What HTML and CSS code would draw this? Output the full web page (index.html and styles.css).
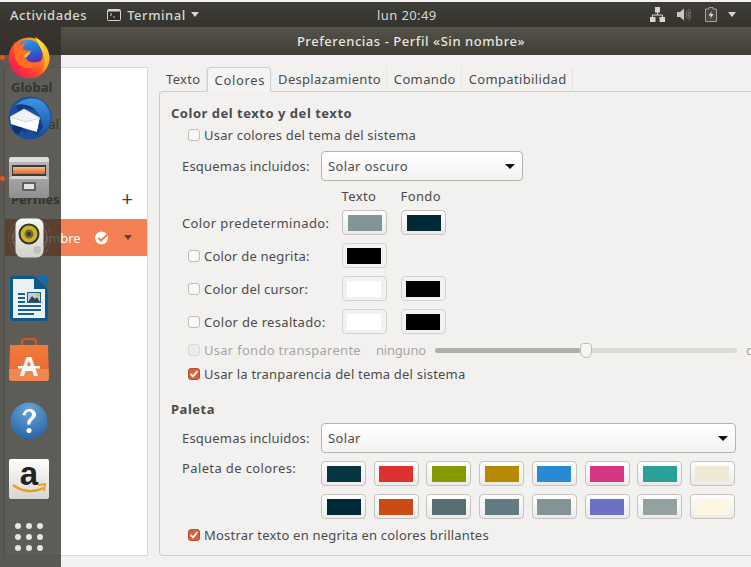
FILE: index.html
```html
<!DOCTYPE html>
<html lang="es">
<head>
<meta charset="utf-8">
<title>Preferencias</title>
<link rel="stylesheet" href="styles.css">
</head>
<body>
<div class="desktop">
  <header class="topbar">
    <div class="top-left">
      <span class="top-text">Actividades</span>
      <span class="top-app">
        <svg class="term-icon" width="14" height="12" viewBox="0 0 14 12"><rect x=".5" y=".5" width="13" height="11" rx="1" fill="#2d2c28" stroke="#d8d6cf"/><rect x="1" y="1" width="12" height="1.500" fill="#d8d6cf"/><path d="M3 4l2 1.500L3 7M6 8h2" stroke="#e8e6df" fill="none" stroke-width=".8"/></svg>
        <span class="top-text">Terminal</span>
        <span class="caret caret-top caret-app"></span>
      </span>
    </div>
    <span class="top-clock">lun 20:49</span>
    <div class="top-right">
      <svg width="15" height="15" viewBox="0 0 15 15"><path d="M5 0h5v5.500H5zM0 10h5.500v5H0zM9.500 10H15v5H9.500z" fill="#d8d6cf"/><path d="M7.500 5v3M2.500 10V8h10v2" stroke="#d8d6cf" fill="none"/></svg>
      <svg width="14" height="13" viewBox="0 0 14 13"><path d="M0 4h3L7 .5v12L3 9H0z" fill="#c9c7c0"/><path d="M8.500 4a3 3 0 010 5M10 2.500a5 5 0 010 8M11.500 1a7 7 0 010 11" stroke="#87857d" fill="none"/></svg>
      <svg class="batt" width="12" height="15" viewBox="0 0 12 15"><path d="M4 .5h4V2h3.500v12.500H.5V2H4z" fill="#4a4840" stroke="#a5a39b"/><path d="M7 4L3.500 8.500H6L5 12l3.500-5H6z" fill="#e8e6df"/></svg>
      <span class="caret caret-top caret-tray"></span>
    </div>
  </header>
  <div class="headerbar">Preferencias - Perfil «Sin nombre»</div>
  <main class="window">
    <aside class="sidebar">
      <div class="side-title side-global">Global</div>
      <div class="side-item">General</div>
      <div class="side-title side-profiles"><span>Perfiles</span><span class="plus">+</span></div>
      <div class="side-active">
        <span class="side-name">Sin nombre</span>
        <svg class="side-check" width="14" height="14" viewBox="0 0 14 14"><circle cx="6.500" cy="7" r="6.500" fill="#fff"/><path d="M3.500 7l2.500 2.500L13 3" stroke="#f48055" stroke-width="2" fill="none"/></svg>
        <span class="caret caret-dark"></span>
      </div>
    </aside>
    <section class="notebook">
      <nav class="tabs">
        <span class="tab">Texto</span>
        <span class="tab tab-active">Colores</span>
        <span class="tab tab-wide">Desplazamiento</span>
        <span class="tab">Comando</span>
        <span class="tab tab-last">Compatibilidad</span>
      </nav>
      <div class="panel">
        <h2 class="heading">Color del texto y del texto</h2>
        <label class="row row-check r-sys"><span class="cb"></span>Usar colores del tema del sistema</label>
        <div class="row row-indent r-scheme"><span class="lab">Esquemas incluidos:</span><div class="combo combo-small"><span>Solar oscuro</span><span class="caret caret-black"></span></div></div>
        <div class="col-heads"><span>Texto</span><span>Fondo</span></div>
        <div class="row row-indent r-color"><span class="lab lab-default">Color predeterminado:</span><span class="sw-btn"><i class="sw c-fg"></i></span><span class="sw-btn"><i class="sw c-bg"></i></span></div>
        <div class="row row-check r-color"><span class="cb"></span><span class="lab2">Color de negrita:</span><span class="sw-btn off"><i class="sw c-black"></i></span></div>
        <div class="row row-check r-color"><span class="cb"></span><span class="lab2">Color del cursor:</span><span class="sw-btn off"><i class="sw c-white"></i></span><span class="sw-btn off"><i class="sw c-black"></i></span></div>
        <div class="row row-check r-color"><span class="cb"></span><span class="lab2 lab-long">Color de resaltado:</span><span class="sw-btn off"><i class="sw c-white"></i></span><span class="sw-btn off"><i class="sw c-black"></i></span></div>
        <div class="row row-check r-trans disabled"><span class="cb cb-dis"></span><span class="lab3">Usar fondo transparente</span><span class="none">ninguno</span><div class="slider"><div class="slider-fill"></div><div class="slider-knob"></div></div><span class="full">completo</span></div>
        <label class="row row-check r-theme"><span class="cb cb-on"><svg width="10" height="10" viewBox="0 0 10 10"><path d="M1.500 5l2.500 2.500L8.500 2" stroke="#fff" stroke-width="1.800" fill="none"/></svg></span>Usar la tranparencia del tema del sistema</label>
        <h2 class="heading h-pal">Paleta</h2>
        <div class="row row-indent r-scheme2"><span class="lab">Esquemas incluidos:</span><div class="combo combo-wide"><span>Solar</span><span class="caret caret-black"></span></div></div>
        <div class="palette-row">
          <span class="lab pal-lab">Paleta de colores:</span>
          <div class="palette">
            <span class="pal-btn"><i class="sw p1"></i></span><span class="pal-btn"><i class="sw p2"></i></span><span class="pal-btn"><i class="sw p3"></i></span><span class="pal-btn"><i class="sw p4"></i></span><span class="pal-btn"><i class="sw p5"></i></span><span class="pal-btn"><i class="sw p6"></i></span><span class="pal-btn"><i class="sw p7"></i></span><span class="pal-btn"><i class="sw p8"></i></span>
            <span class="pal-btn"><i class="sw p9"></i></span><span class="pal-btn"><i class="sw p10"></i></span><span class="pal-btn"><i class="sw p11"></i></span><span class="pal-btn"><i class="sw p12"></i></span><span class="pal-btn"><i class="sw p13"></i></span><span class="pal-btn"><i class="sw p14"></i></span><span class="pal-btn"><i class="sw p15"></i></span><span class="pal-btn"><i class="sw p16"></i></span>
          </div>
        </div>
        <label class="row row-check r-bright"><span class="cb cb-on"><svg width="10" height="10" viewBox="0 0 10 10"><path d="M1.500 5l2.500 2.500L8.500 2" stroke="#fff" stroke-width="1.800" fill="none"/></svg></span>Mostrar texto en negrita en colores brillantes</label>
      </div>
    </section>
  </main>

  <nav class="dock">
    <span class="dock-dot dot-ff"></span>
    <span class="dock-dot dot-files"></span>
    <svg class="dock-icon i-firefox" width="42" height="42" viewBox="0 0 42 42">
      <defs>
        <linearGradient id="ffo" x1="0" y1="1" x2="1" y2="0"><stop offset="0" stop-color="#d9146f"/><stop offset=".3" stop-color="#ff2f3a"/><stop offset=".62" stop-color="#ff7a1f"/><stop offset="1" stop-color="#ffc81f"/></linearGradient>
        <linearGradient id="ffb" x1="0" y1="0" x2=".2" y2="1"><stop offset="0" stop-color="#2f9df0"/><stop offset=".6" stop-color="#2a5fd0"/><stop offset="1" stop-color="#5a2bb0"/></linearGradient>
        <linearGradient id="ffy" x1="0" y1="0" x2="0" y2="1"><stop offset="0" stop-color="#ffe02a"/><stop offset="1" stop-color="#ff9a1f"/></linearGradient>
      </defs>
      <circle cx="21" cy="22" r="20.500" fill="url(#ffo)"/>
      <path d="M12 6C18 3 28 3 32 10C37 18 35 27 27 29C21 30 17 26 15 22z" fill="url(#ffb)"/>
      <path d="M7 5C7 9 9 12 11 13C12 9 15 7 19 5C16 9 15 11 15 13C18 15 21 14 23 15C22 18 19 18 17 20C18 26 25 28 33 25C29 32 20 34 13 30C7 26 4 15 7 5z" fill="#ff6d22"/>
      <path d="M16 20c1-3 5-3 7-5-2 4-4 5-5 7z" fill="#ffd24a"/>
      <path d="M27 1C35 5 41 13 41.500 22C41.500 28 38 34 34 37C38 28 37 20 33 13C31 9 29 5 27 1z" fill="url(#ffy)"/>
      <path d="M28 2c4 4 7 8 8 14-3-4-6-8-8-14z" fill="#ffe02a"/>
    </svg>
    <svg class="dock-icon i-tbird" width="46" height="44" viewBox="0 0 46 44">
      <defs><linearGradient id="tbb" x1="0" y1="0" x2="0" y2="1"><stop offset="0" stop-color="#3a96e4"/><stop offset="1" stop-color="#174a9c"/></linearGradient></defs>
      <circle cx="24" cy="22" r="21.500" fill="#1a4f9e"/>
      <path d="M9 10C15 2 30 0 37 6C44 12 46 21 43 29C41 34 36 39 30 42C35 35 37 27 34 20C31 13 21 9 9 10z" fill="url(#tbb)"/>
      <path d="M10 9c7-2 14 0 20 5-7-2-13-1-18 2z" fill="#0f3a80"/>
      <path d="M4 21L18 13L34 22L31 36L24 34L5 28z" fill="#fff"/>
      <path d="M4 21L20 26L34 22L18 13z" fill="#f0f2f5" stroke="#c6ccd6" stroke-width=".8"/>
      <path d="M24 35l7 1 3-14 3 9-5 8zM14 32l8 3-3 3z" fill="#12408c"/>
      <path d="M6 29l1 6 5 4 5-7z" fill="#0f3270"/>
    </svg>
    <svg class="dock-icon i-files" width="40" height="41" viewBox="0 0 40 41">
      <defs>
        <linearGradient id="fg" x1="0" y1="0" x2="0" y2="1"><stop offset="0" stop-color="#bcbcbc"/><stop offset="1" stop-color="#8f8f8f"/></linearGradient>
        <linearGradient id="fo" x1="0" y1="0" x2="0" y2="1"><stop offset="0" stop-color="#f6c07e"/><stop offset="1" stop-color="#e0622c"/></linearGradient>
      </defs>
      <path d="M3 0h34a3 3 0 013 3v36a2 2 0 01-2 2H2a2 2 0 01-2-2V3a3 3 0 013-3z" fill="url(#fg)"/>
      <path d="M3 0h34a3 3 0 013 3v2H0V3a3 3 0 013-3z" fill="#dcdcdc"/>
      <rect x="3" y="8" width="34" height="11" fill="#3f3a34"/>
      <rect x="4" y="10" width="32" height="7" fill="url(#fo)"/>
      <path d="M3 19h34l3 3H0z" fill="#d3d3d3"/>
      <rect x="13" y="25" width="14" height="9" rx="1" fill="#5f5f5f"/>
      <rect x="15" y="27" width="10" height="5" fill="#e2e2e2"/>
    </svg>
    <svg class="dock-icon i-speaker" width="46" height="46" viewBox="0 0 46 46">
      <defs><linearGradient id="sg" x1="0" y1="0" x2="0" y2="1"><stop offset="0" stop-color="#f8f8f5"/><stop offset="1" stop-color="#d2d2cb"/></linearGradient></defs>
      <circle cx="23" cy="23" r="21" fill="none" stroke="#8a96a8" stroke-width="1.200" opacity=".16"/>
      <circle cx="23" cy="23" r="17" fill="none" stroke="#9aa6b8" stroke-width="1.500" opacity=".25"/>
      <rect x="8.500" y="3.500" width="28" height="39" rx="7" fill="url(#sg)"/>
      <circle cx="22" cy="19" r="10.500" fill="#35342f"/>
      <circle cx="22" cy="19" r="8.500" fill="#cdb422"/>
      <circle cx="22" cy="19" r="4.500" fill="#6f6a42"/>
      <circle cx="22" cy="19" r="2.200" fill="#3a3a34"/>
      <circle cx="30" cy="35" r="4" fill="#c2c2bb"/>
    </svg>
    <svg class="dock-icon i-writer" width="38" height="45" viewBox="0 0 38 45">
      <path d="M3 0h22l13 13v29a3 3 0 01-3 3H3a3 3 0 01-3-3V3a3 3 0 013-3z" fill="#0a5a8f"/>
      <path d="M27 0h8.500a2.500 2.500 0 012.500 2.500V11z" fill="#0a6fb0"/>
      <path d="M3 3h21v10h11v29H3z" fill="#edf0f2"/>
      <path d="M8 17h7v2H8zM8 21h7v2H8zM8 25h7v2H8zM8 29h23v2H8zM8 33h23v2H8zM8 37h16v2H8z" fill="#16608f"/>
      <rect x="17.500" y="16.500" width="13" height="10" fill="#bcd3e4" stroke="#16608f"/>
      <path d="M18 26l4-6 3 3 2-2 3 5z" fill="#40423f"/>
      <rect x="26" y="17" width="4" height="3" fill="#f0c020"/>
    </svg>
    <svg class="dock-icon i-soft" width="40" height="43" viewBox="0 0 40 43">
      <defs><linearGradient id="og" x1="0" y1="0" x2="0" y2="1"><stop offset="0" stop-color="#f27a3e"/><stop offset="1" stop-color="#e8662e"/></linearGradient></defs>
      <path d="M13 9V4a3 3 0 013-3h8a3 3 0 013 3v5" fill="none" stroke="#d4551f" stroke-width="2.500"/>
      <path d="M1 7h38l1 33a3 3 0 01-3 3H3a3 3 0 01-3-3z" fill="url(#og)"/>
      <path d="M.3 31h39.400l.3 9a3 3 0 01-3 3H3a3 3 0 01-3-3z" fill="#f08650"/>
      <text class="soft-a" x="20" y="38" text-anchor="middle">A</text>
      <rect x="9" y="28" width="22" height="2.500" fill="#fff"/>
    </svg>
    <svg class="dock-icon i-help" width="38" height="38" viewBox="0 0 38 38">
      <defs><radialGradient id="hg" cx=".5" cy=".2" r=".9"><stop offset="0" stop-color="#6aa4d8"/><stop offset="1" stop-color="#1f5e9e"/></radialGradient></defs>
      <circle cx="19" cy="19" r="18.500" fill="url(#hg)"/>
      <path d="M12.500 13c1-4 4-6 7-6 4 0 6.500 2.500 6.500 5.500 0 5-5.500 5-5.500 10h-3.500c0-6 5-6.500 5-10 0-1.800-1.200-3-3-3-2 0-3 1.500-3.500 4z" fill="#fff"/>
      <circle cx="19" cy="28.500" r="2.500" fill="#fff"/>
    </svg>
    <div class="dock-icon i-amazon">
      <span class="amz-a">a</span>
      <svg class="amz-smile" width="34" height="12" viewBox="0 0 34 12"><path d="M1 2c9 7 21 8 30 3" stroke="#f09a1c" stroke-width="2.400" fill="none"/><path d="M26 2l7-1-1 7" stroke="#f09a1c" stroke-width="1.800" fill="none"/></svg>
    </div>
    <div class="dock-icon i-grid"><i></i><i></i><i></i><i></i><i></i><i></i><i></i><i></i><i></i></div>
  </nav>
</div>
</body>
</html>
```
FILE: styles.css
```css
* { box-sizing: border-box; }
html, body { margin: 0; padding: 0; }
body { width: 751px; height: 567px; overflow: hidden; font-family: "Noto Sans", "Open Sans", sans-serif; font-size: 13px; color: #4c4c4c; background: #f2f1f0; }
.desktop { position: relative; width: 751px; height: 567px; display: flex; flex-direction: column; overflow: hidden; }

.topbar { height: 25px; margin-top: 2px; flex: none; background: linear-gradient(#3f3d37, #35332e); color: #d8d6cf; display: grid; grid-template-columns: 367px auto 1fr; align-items: center; padding: 0 15px 0 10px; font-size: 13px; }
.top-left { display: flex; align-items: center; gap: 20px; }
.top-app { display: flex; align-items: center; gap: 6px; }
.top-text { font-weight: 500; letter-spacing: .55px; }
.caret-app { margin-left: -1px; }
.top-clock { letter-spacing: .4px; }
.top-right { display: flex; justify-content: flex-end; align-items: center; gap: 12px; }
.batt { margin-left: 2px; }
.caret-tray { margin-left: -1px; }
.caret { display: inline-block; width: 0; height: 0; border-left: 4.500px solid transparent; border-right: 4.500px solid transparent; border-top: 5px solid #d8d6cf; }
.headerbar { height: 28px; flex: none; background: linear-gradient(#55524a, #3f3d36); color: #e6e4dd; font-weight: 500; letter-spacing: .55px; display: flex; align-items: center; justify-content: center; padding-left: 71px; font-size: 13px; }

.window { flex: 1; min-height: 0; display: flex; padding: 12px 0 11px 4px; gap: 11px; }
.sidebar { width: 144px; flex: none; background: #fff; border: 1px solid #dbd9d6; border-left-color: #c8c6c2; display: flex; flex-direction: column; }
.side-title { font-weight: 700; padding-left: 6px; color: #4c4c4c; }
.side-global { margin-top: 10px; height: 18px; line-height: 18px; }
.side-item { margin-top: 19px; height: 18px; line-height: 18px; padding-left: 6px; }
.side-profiles { margin-top: 56px; display: flex; justify-content: space-between; align-items: center; padding-right: 14px; height: 20px; }
.plus { font-weight: 400; font-size: 20px; line-height: 20px; color: #3c3c3c; }
.side-active { margin-top: 10px; height: 37px; background: #f48055; color: #fff; display: flex; align-items: center; padding-left: 6px; }
.side-name { width: 84px; white-space: nowrap; letter-spacing: -.1px; }
.side-check { flex: none; }
.caret-dark { margin-left: 15px; border-top-color: #5a4038; }

.notebook { flex: 1; min-width: 0; display: flex; flex-direction: column; }
.tabs { display: flex; height: 25px; flex: none; position: relative; z-index: 1; margin-bottom: -1px; }
.tab { padding: 0 5px 0 7px; height: 25px; line-height: 24px; border-right: 1px solid #e8e7e5; white-space: nowrap; letter-spacing: .35px; }
.tab-active { background: #f5f4f3; border: 1px solid #cfcdca; border-bottom: 1px solid #f2f1f0; border-radius: 4px 4px 0 0; padding: 0 5px 0 7px; letter-spacing: .65px; }
.tab-wide { letter-spacing: .3px; }
.tab-last { border-right: 1px solid #e3e2e0; }
.panel { flex: 1; border: 1px solid #cfcdca; border-right: 0; border-radius: 4px 0 0 4px; margin-right: -1px; padding-left: 11px; display: flex; flex-direction: column; }
.heading { margin: 12px 0 0; height: 18px; line-height: 18px; font-size: 13px; font-weight: 700; letter-spacing: .52px; }
.row { display: flex; align-items: center; white-space: nowrap; letter-spacing: .2px; }
.row-check { padding-left: 17px; }
.row-indent { padding-left: 11px; }
.cb { flex: none; width: 12px; height: 12px; border: 1px solid #bfbdb9; border-radius: 3px; background: #f8f8f7; margin-right: 4px; display: inline-flex; align-items: center; justify-content: center; }
.cb-dis { background: #ecebe9; border-color: #dad8d5; }
.cb-on { background: #d9603a; border-color: #b64f2e; }
.r-sys { margin-top: 4px; height: 18px; }
.r-scheme { margin-top: 7px; height: 30px; }
.lab { width: 139px; flex: none; }
.combo { flex: none; height: 30px; border: 1px solid #b6b4b0; border-radius: 4px; background: linear-gradient(#fff, #f4f3f2); display: flex; align-items: center; justify-content: space-between; padding: 0 7px 0 6px; letter-spacing: .36px; }
.combo-small { width: 202px; }
.combo-wide { width: 415px; }
.caret-black { border-top-color: #111; border-left-width: 5px; border-right-width: 5px; }
.col-heads { display: flex; margin-top: 6px; height: 18px; padding-left: 170.500px; line-height: 18px; letter-spacing: .4px; }
.col-heads span { width: 59px; }
.r-color { height: 25px; margin-top: 8px; }
.col-heads + .r-color { margin-top: 5px; }
.r-color .lab-default { width: 160px; letter-spacing: .38px; }
.lab2 { flex: none; width: 137.500px; }
.lab-long { letter-spacing: .32px; }
.sw-btn { flex: none; width: 45px; height: 25px; border: 1px solid #c4c2be; border-radius: 4px; background: linear-gradient(#fff, #ecebe9); display: flex; align-items: center; justify-content: center; margin-right: 14px; }
.sw-btn.off { background: #f2f1f0; border-color: #d4d2cf; }
.sw { display: block; width: 34px; height: 16px; }
.r-trans { margin-top: 7px; height: 18px; }
.disabled { color: #a7a6a3; }
.lab3 { width: 172px; flex: none; letter-spacing: .28px; }
.none { width: 59px; flex: none; letter-spacing: -.2px; }
.slider { position: relative; width: 302px; height: 5px; border-radius: 3px; background: #dcdbd8; flex: none; }
.slider-fill { width: 48%; height: 100%; border-radius: 3px; background: #b0aeaa; }
.slider-knob { position: absolute; left: 145px; top: -5px; width: 12px; height: 15px; border: 1px solid #bdbbb7; border-radius: 4px 4px 7px 7px; background: #f6f5f4; }
.full { margin-left: 9px; }
.r-theme { margin-top: 6px; height: 18px; }
.h-pal { margin-top: 17px; }
.r-scheme2 { margin-top: 5px; height: 30px; }
.palette-row { display: flex; padding-left: 11px; margin-top: 8px; }
.pal-lab { line-height: 15px; height: 18px; letter-spacing: .38px; }
.palette { width: 414px; display: grid; grid-template-columns: repeat(8, 45px); justify-content: space-between; row-gap: 8px; }
.pal-btn { height: 25px; border: 1px solid #c4c2be; border-radius: 4px; background: linear-gradient(#fff, #ecebe9); display: flex; align-items: center; justify-content: center; }
.r-bright { margin-top: 7px; height: 18px; }

.c-fg { background: #839496; } .c-bg { background: #002b36; } .c-black { background: #000; } .c-white { background: #fff; }
.p1 { background: #073642; } .p2 { background: #dc322f; } .p3 { background: #859900; } .p4 { background: #b58900; }
.p5 { background: #268bd2; } .p6 { background: #d33682; } .p7 { background: #2aa198; } .p8 { background: #eee8d5; }
.p9 { background: #002b36; } .p10 { background: #cb4b16; } .p11 { background: #586e75; } .p12 { background: #657b83; }
.p13 { background: #839496; } .p14 { background: #6c71c4; } .p15 { background: #93a1a1; } .p16 { background: #fdf6e3; }

.dock { position: absolute; left: 0; top: 27px; bottom: 0; width: 61px; background: rgba(48, 46, 38, .78); }
.dock-icon { position: absolute; display: block; }
.dock-dot { position: absolute; left: 0; width: 5px; height: 5px; border-radius: 50%; background: #e9541f; }
.dot-ff { top: 27.500px; }
.dot-files { top: 148.500px; }
.i-firefox { left: 8px; top: 9px; }
.i-tbird { left: 6px; top: 69px; }
.i-files { left: 9px; top: 130px; }
.i-speaker { left: 7px; top: 188px; }
.i-writer { left: 10px; top: 249px; }
.i-soft { left: 9px; top: 311px; }
.i-help { left: 10px; top: 375px; }
.soft-a { font-family: "Liberation Sans", sans-serif; font-weight: 700; font-size: 27px; fill: #fff; }
.i-amazon { left: 9px; top: 432px; width: 40px; height: 40px; border-radius: 2px; background: linear-gradient(#fff, #d5d5d3); color: #222; display: flex; justify-content: center; }
.amz-a { font-family: "Liberation Sans", sans-serif; font-weight: 700; font-size: 33px; line-height: 30px; }
.amz-smile { position: absolute; left: 3px; top: 24px; }
.i-grid { left: 15px; top: 496px; width: 28px; display: grid; grid-template-columns: repeat(3, 6px); justify-content: space-between; row-gap: 5px; }
.i-grid i { width: 6px; height: 6px; border-radius: 50%; background: #e6e5e2; }
```
